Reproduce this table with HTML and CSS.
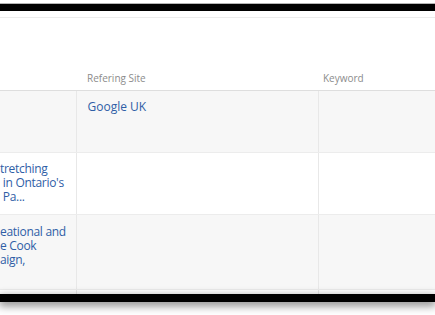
FILE: index.html
```html
<!DOCTYPE html>
<html lang="en">
<head>
	<meta charset="UTF-8">
	<title>Referrals</title>
	<link rel="stylesheet" href="styles.css">
</head>
<body>
	<div class="frame frame-top"></div>
	<div class="panel">
		<div class="panel-rule"></div>
		<table class="refs">
			<colgroup>
				<col class="c-title">
				<col class="c-site">
				<col class="c-key">
			</colgroup>
			<thead>
				<tr>
					<th>Page</th>
					<th>Refering Site</th>
					<th class="key">Keyword</th>
				</tr>
			</thead>
			<tbody>
				<tr class="alt">
					<td></td>
					<td><a href="#">Google UK</a></td>
					<td></td>
				</tr>
				<tr>
					<td>
						<a href="#" class="title">
							<span class="ln"><span class="cut">Longest-S</span>tretching</span>
							<span class="ln"><span class="cut">Trails</span> in Ontario's</span>
							<span class="ln"><span class="cut">Provincial</span> Pa...</span>
						</a>
					</td>
					<td></td>
					<td></td>
				</tr>
				<tr class="alt">
					<td>
						<a href="#" class="title">
							<span class="ln"><span class="cut">Hikes, Recr</span>eational and</span>
							<span class="ln"><span class="cut">Areas in th</span>e Cook</span>
							<span class="ln"><span class="cut">County Camp</span>aign,</span>
						</a>
					</td>
					<td></td>
					<td></td>
				</tr>
				<tr>
					<td></td>
					<td></td>
					<td></td>
				</tr>
			</tbody>
		</table>
	</div>
	<div class="frame frame-bottom"></div>
</body>
</html>
```
FILE: styles.css
```css
* {margin: 0;padding: 0;box-sizing: border-box;}
html, body {background: #fff;overflow: hidden;}
body {width: 435px;height: 315px;font-family: "Open Sans", "Liberation Sans", sans-serif;}
a {color: #2f5ea6;text-decoration: none;}

.frame {height: 8px;background: #000;}
.frame-top {margin-top: 3px;border-top: 1px solid #b4b4b4;}
.frame-bottom {position: relative;box-shadow: 0 3px 8px 1px rgba(0, 0, 0, .45);}

.panel {height: 283px;overflow: hidden;padding-top: 6px;}
.panel-rule {height: 1px;background: #ececec;}

.refs {table-layout: fixed;border-collapse: collapse;width: 620px;margin-left: -94px;}
.refs .c-title {width: 170px;}
.refs .c-site {width: 242px;}
.refs .c-key {width: 208px;}
.refs th {height: 72px;vertical-align: bottom;padding: 0 0 5px 11px;text-align: left;font-size: 10px;font-weight: normal;color: #8c8c8c;border-bottom: 1px solid #dedede;}
.refs th.key {padding-left: 5px;}
.refs td {height: 62px;vertical-align: top;padding: 9px 11px 0;font-size: 12px;line-height: 14px;white-space: nowrap;border-bottom: 1px solid #ececec;border-left: 1px solid #e8e8e8;}
.refs td:first-child {border-left: 0;overflow: hidden;}
.refs tr.alt td {background: #f7f7f7;}
.refs tbody tr:nth-child(3) td {height: 75px;padding-top: 10px;}

/* long titles wrap into fixed lines; the lead of each line sits in a fixed box */
.title {display: block;letter-spacing: -0.3px;}
.title .ln {display: block;}
.title .cut {display: inline-block;width: 83px;overflow: hidden;text-align: right;vertical-align: top;}
```
